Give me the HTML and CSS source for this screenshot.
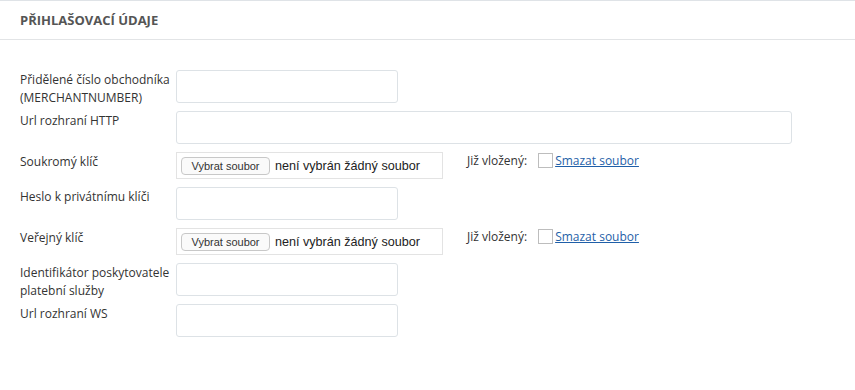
FILE: index.html
```html
<!DOCTYPE html>
<html lang="cs">
  <head>
    <meta charset="UTF-8" />
    <meta name="viewport" content="width=device-width, initial-scale=1" />
    <title>Přihlašovací údaje</title>
    <link rel="stylesheet" href="styles.css">
  </head>
  <body>
    <div class="panel">
      <div class="panel-head">Přihlašovací údaje</div>
      <div class="panel-body">
        <!-- Merchant number -->
        <div class="row">
          <label class="label">Přidělené číslo obchodníka (MERCHANTNUMBER)</label>
          <input class="field" type="text" />
        </div>
        <div class="row">
          <label class="label">Url rozhraní HTTP</label>
          <input class="field wide" type="text" />
        </div>

        <!-- Private key upload -->
        <div class="row">
          <label class="label">Soukromý klíč</label>
          <div class="file-box">
            <button class="file-btn" type="button">Vybrat soubor</button>
            <span class="file-name">není vybrán žádný soubor</span>
          </div>
          <div class="existing">
            <span>Již vložený:</span>
            <span class="check"></span>
            <a href="#" class="delete">Smazat soubor</a>
          </div>
        </div>
        <div class="row">
          <label class="label">Heslo k privátnímu klíči</label>
          <input class="field" type="password" />
        </div>

        <!-- Public key upload -->
        <div class="row">
          <label class="label">Veřejný klíč</label>
          <div class="file-box">
            <button class="file-btn" type="button">Vybrat soubor</button>
            <span class="file-name">není vybrán žádný soubor</span>
          </div>
          <div class="existing">
            <span>Již vložený:</span>
            <span class="check"></span>
            <a href="#" class="delete">Smazat soubor</a>
          </div>
        </div>
        <div class="row">
          <label class="label">Identifikátor poskytovatele platební služby</label>
          <input class="field" type="text" />
        </div>
        <div class="row">
          <label class="label">Url rozhraní WS</label>
          <input class="field" type="text" />
        </div>
      </div>
    </div>
  </body>
</html>
```

FILE: styles.css
```css
* {
  margin: 0;
  padding: 0;
  box-sizing: border-box;
}
body {
  background: #fff;
  font-family: "Open Sans", "Liberation Sans", sans-serif;
  font-size: 12px;
  color: #333;
}
.panel {
  border-top: 1px solid #dfe3e7;
}
.panel-head {
  padding: 10px 20px;
  line-height: 18px;
  font-size: 13px;
  font-weight: 700;
  text-transform: uppercase;
  color: #555;
  border-bottom: 1px solid #e2e4e6;
}
.panel-body {
  padding: 30px 20px;
  display: flex;
  flex-direction: column;
  gap: 4px;
}
/* one label + control per row; controls carry 4px extra below */
.row {
  display: flex;
  align-items: flex-start;
}
.label {
  width: 156px;
  flex-shrink: 0;
  padding: 1px 6px 0 0;
  line-height: 18px;
}
.field {
  width: 222px;
  height: 33px;
  margin-bottom: 4px;
  border: 1px solid #dde2e6;
  border-radius: 3px;
  background: #fff;
  outline: none;
}
.field.wide {
  width: 616px;
}
.file-box {
  width: 267px;
  height: 27px;
  margin-bottom: 4px;
  border: 1px solid #e3e3e3;
  padding: 4px;
  display: flex;
  align-items: center;
  gap: 5px;
  font-family: "Liberation Sans", Arial, sans-serif;
}
.file-btn {
  height: 18px;
  width: 89px;
  border: 1px solid #c8c8c8;
  border-radius: 4px;
  background: #fafafa;
  font-family: "Liberation Sans", Arial, sans-serif;
  font-size: 11px;
  color: #333;
}
.file-name {
  font-size: 12.6px;
  color: #222;
}
.existing {
  display: flex;
  align-items: flex-start;
  margin-left: 24px;
  line-height: 18px;
}
.check {
  width: 15px;
  height: 15px;
  border: 1px solid #bdbdbd;
  margin: 1px 2px 0 11px;
}
.delete {
  color: #1f5fa8;
  text-decoration: underline;
}
```
